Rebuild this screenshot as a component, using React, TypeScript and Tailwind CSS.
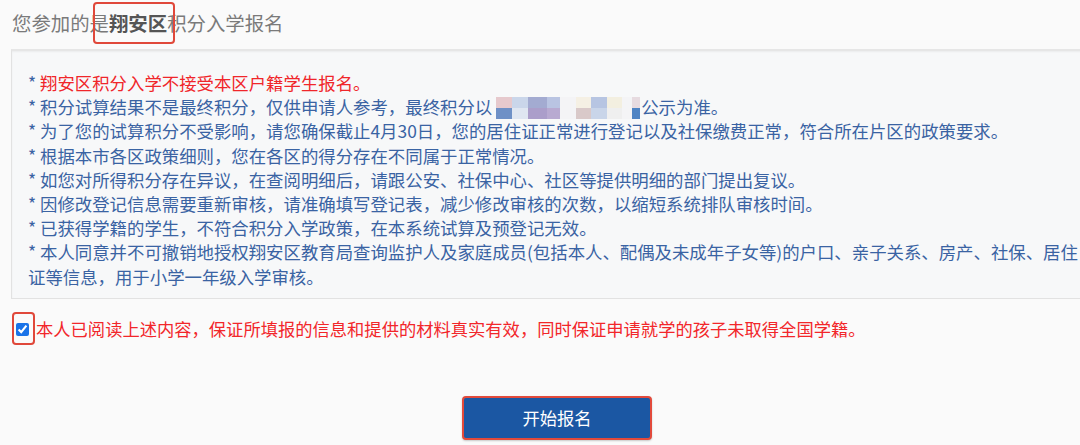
import React from "react";

const FONT = { fontFamily: '"Noto Sans CJK SC", "Noto Sans", "Liberation Sans", sans-serif' };

function Blur() {
  const top = ["#e6c9cd", "#cad6ea", "#a3abd1", "#b9c4e2", "#f4f4f6", "#f5f0e4", "#b7c5e2", "#f3efe0", "#f4f4f6", "#e7dbe0"];
  const bot = ["#6e90c6", "#dfe6f1", "#ab9eca", "#b8aad1", "#f4f4f6", "#d9c9c9", "#c9d5e9", "#efefef", "#f4f4f6", "#4f84c4"];
  const xs = [4, 20, 36, 55, 68, 84, 99, 115, 130, 140];
  const ws = [16, 16, 19, 13, 16, 15, 16, 15, 10, 8];
  return (
    <svg width="149" height="22" viewBox="0 0 149 22" className="inline-block align-middle -mt-[3px]">
      {xs.map((x, i) => (
        <g key={i}>
          <rect x={x} y={0} width={ws[i]} height={11} fill={top[i]} />
          <rect x={x} y={11} width={ws[i]} height={11} fill={bot[i]} />
        </g>
      ))}
    </svg>
  );
}

export default function App() {
  const lines: React.ReactNode[] = [
    <span className="text-[#f0262a]">翔安区积分入学不接受本区户籍学生报名。</span>,
    <>
      积分试算结果不是最终积分，仅供申请人参考，最终积分以<Blur />公示为准。
    </>,
    "为了您的试算积分不受影响，请您确保截止4月30日，您的居住证正常进行登记以及社保缴费正常，符合所在片区的政策要求。",
    "根据本市各区政策细则，您在各区的得分存在不同属于正常情况。",
    "如您对所得积分存在异议，在查阅明细后，请跟公安、社保中心、社区等提供明细的部门提出复议。",
    "因修改登记信息需要重新审核，请准确填写登记表，减少修改审核的次数，以缩短系统排队审核时间。",
    "已获得学籍的学生，不符合积分入学政策，在本系统试算及预登记无效。",
    "本人同意并不可撤销地授权翔安区教育局查询监护人及家庭成员(包括本人、配偶及未成年子女等)的户口、亲子关系、房产、社保、居住",
  ];
  return (
    <div className="w-[1080px] h-[445px] overflow-hidden bg-[#fafafa]" style={FONT}>
      <div className="pt-[9px] pl-[12px] h-[49px]">
        <div className="relative inline-block text-[19.4px] leading-[28px] text-[#7a7a7a]">
          您参加的是<b className="text-[#555555] font-bold">翔安区</b>积分入学报名
          <div className="absolute left-[81px] top-[-7px] w-[82px] h-[42px] border-2 border-[#e0483a] rounded-[4px]" />
        </div>
      </div>
      <div className="ml-[11px] w-[1100px] h-[250px] border border-[#e2e2e2] border-t-2 border-t-[#e6e6e6] bg-[#f7f8f9] shadow-[inset_0_1px_2px_rgba(0,0,0,0.05)] pl-4 pt-[20px] text-[17.4px] leading-[24.2px] text-[#3a63a3] whitespace-nowrap">
        {lines.map((l, i) => (
          <div key={i}>
            <span className="text-[#3a63a3]">* </span>
            {l}
          </div>
        ))}
        <div>证等信息，用于小学一年级入学审核。</div>
      </div>
      <div className="mt-[18px] flex items-center h-[24px] pl-[16px]">
        <div className="relative flex items-center">
          <input type="checkbox" defaultChecked className="m-0 w-[13px] h-[13px] accent-[#1a73e8]" />
          <div className="absolute left-[-4px] top-[-11px] w-[23px] h-[33px] border-2 border-[#e0483a] rounded-[4px]" />
        </div>
        <span className="ml-[7px] text-[17.3px] leading-[24px] text-[#f2262a] whitespace-nowrap">
          本人已阅读上述内容，保证所填报的信息和提供的材料真实有效，同时保证申请就学的孩子未取得全国学籍。
        </span>
      </div>
      <div className="mt-[55px] ml-[462px]">
        <button className="w-[190px] h-[44px] rounded-[4px] border-2 border-[#e24a3b] bg-[#1b57a3] text-white text-[17.3px] shadow-[0_1px_2px_rgba(0,0,0,0.2)]">
          开始报名
        </button>
      </div>
    </div>
  );
}
